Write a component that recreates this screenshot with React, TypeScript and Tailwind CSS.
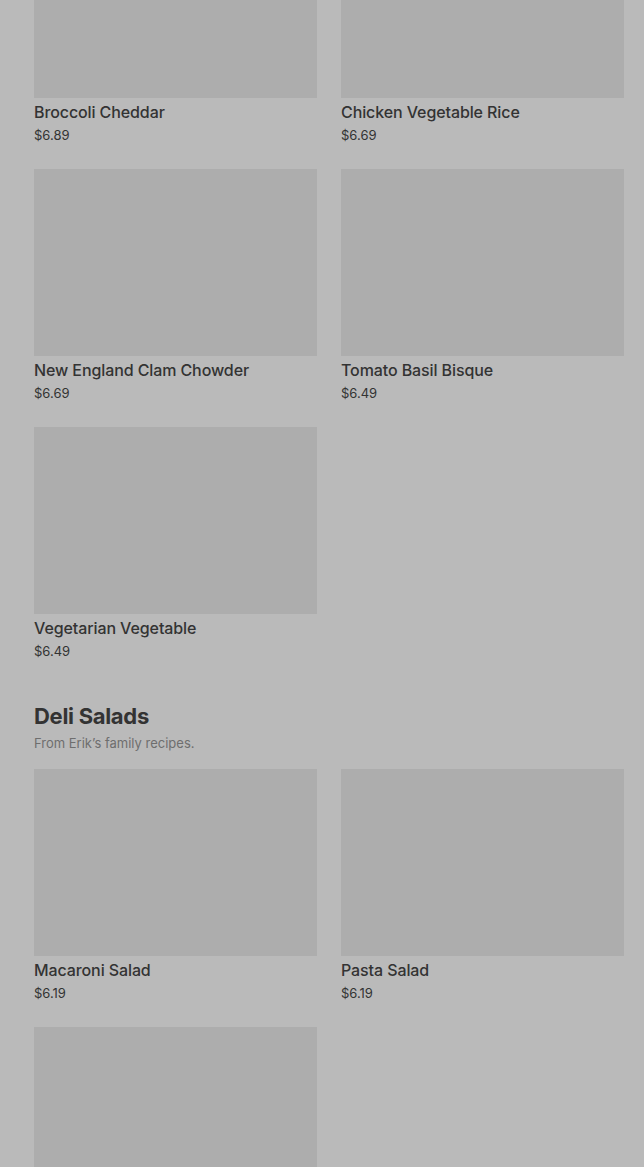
import React from "react";

type Item = { name: string; price: string };

const soups: Item[] = [
  { name: "Broccoli Cheddar", price: "$6.89" },
  { name: "Chicken Vegetable Rice", price: "$6.69" },
  { name: "New England Clam Chowder", price: "$6.69" },
  { name: "Tomato Basil Bisque", price: "$6.49" },
  { name: "Vegetarian Vegetable", price: "$6.49" },
];

const salads: Item[] = [
  { name: "Macaroni Salad", price: "$6.19" },
  { name: "Pasta Salad", price: "$6.19" },
  { name: "", price: "" },
];

function Card({ item }: { item: Item }) {
  return (
    <div className="flex flex-col">
      <div className="h-[187px] bg-[#adadad]" />
      <div className="mt-[4px] text-[16px] leading-[20px] font-medium text-[#333333] tracking-[-0.1px]">
        {item.name}
      </div>
      <div className="mt-[4px] text-[13px] leading-[18px] text-[#333333]">{item.price}</div>
    </div>
  );
}

export default function App() {
  return (
    <div
      className="min-h-[1167px] bg-[#bababa] pl-[34px] pr-[20px] overflow-hidden"
      style={{ fontFamily: "Inter, 'Noto Sans', sans-serif" }}
    >
      <div className="mt-[-89px] grid grid-cols-2 gap-x-[24px] gap-y-[25px]">
        {soups.map((s) => (
          <Card key={s.name} item={s} />
        ))}
      </div>
      <div className="mt-[42px]">
        <h2 className="text-[22px] leading-[28px] font-bold text-[#333333] tracking-[-0.3px]">Deli Salads</h2>
        <p className="mt-[3px] text-[13px] leading-[20px] text-[#6e6e6e]">From Erik’s family recipes.</p>
      </div>
      <div className="mt-[16px] grid grid-cols-2 gap-x-[24px] gap-y-[25px]">
        {salads.map((s, i) => (
          <Card key={i} item={s} />
        ))}
      </div>
    </div>
  );
}
